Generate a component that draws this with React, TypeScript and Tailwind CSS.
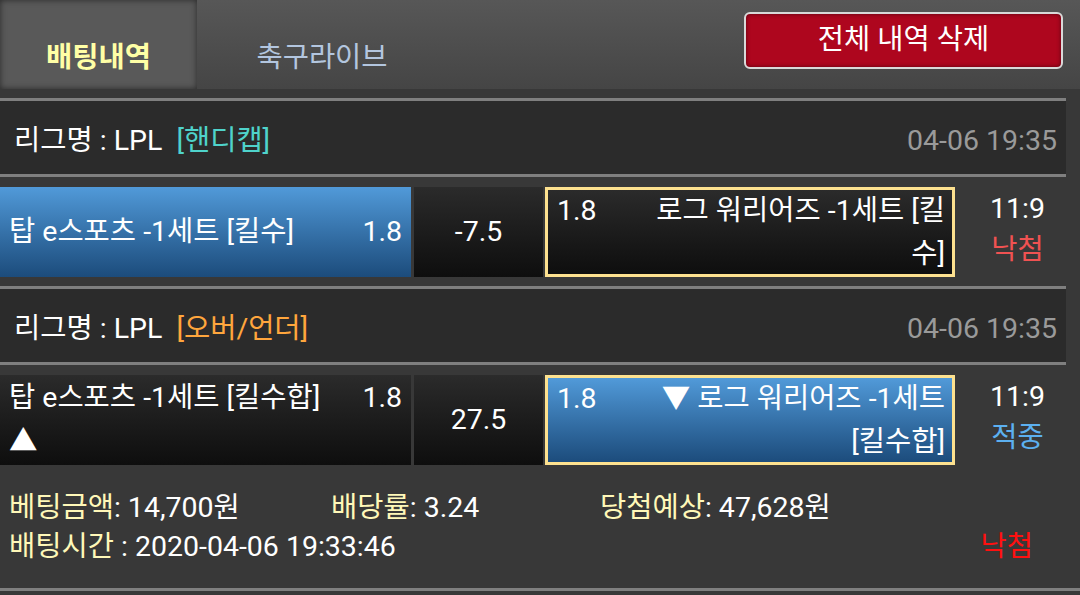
import React from "react";

const FONT = { fontFamily: 'Roboto, "Noto Sans CJK KR", "Noto Sans", sans-serif' };

const blueBox = "bg-gradient-to-b from-[#519ad9] to-[#1c4c7c]";
const darkBox = "bg-gradient-to-b from-[#2b2b2b] to-[#0e0e0e]";

function LeagueRow({ type, typeColor }: { type: string; typeColor: string }) {
  return (
    <div className="w-[1066px] h-[79px] border-y-[3px] border-[#7f7f7f] bg-[#2b2b2b] flex items-center justify-between pl-[14px] pr-[9px] pt-[7px]">
      <div className="flex items-center text-white">
        <span>리그명 : LPL</span>
        <span className={`ml-[14px] ${typeColor}`}>{type}</span>
      </div>
      <span className="text-[#9a9a9a]">04-06 19:35</span>
    </div>
  );
}

type MatchProps = {
  home: string[];
  homeSel: boolean;
  line: string;
  away: string[];
  awaySel: boolean;
  result: string;
  resultColor: string;
  last?: boolean;
};

function MatchRow({ home, homeSel, line, away, awaySel, result, resultColor, last }: MatchProps) {
  return (
    <div className={`flex h-[90px] mt-[10px] text-white ${last ? "" : "mb-[9px]"}`}>
      {/* home */}
      <div className={`w-[411px] flex items-center px-[9px] ${homeSel ? blueBox : darkBox}`}>
        <div className="flex w-full justify-between items-start leading-[44px]">
          <div>
            {home.map((l, i) => (
              <div key={i}>{l}</div>
            ))}
          </div>
          <span>1.8</span>
        </div>
      </div>
      {/* handicap / total */}
      <div className={`ml-[3px] w-[129px] flex items-center justify-center ${darkBox}`}>{line}</div>
      {/* away */}
      <div
        className={`ml-[2px] w-[410px] border-[3px] border-[#fde18f] flex items-center pl-[9px] pr-[7px] ${awaySel ? blueBox : darkBox}`}
      >
        <div className="flex w-full justify-between items-start leading-[43px]">
          <span>1.8</span>
          <div className="text-right">
            {away.map((l, i) => (
              <div key={i}>{l}</div>
            ))}
          </div>
        </div>
      </div>
      {/* score */}
      <div className="flex-1 flex flex-col items-center justify-center leading-[41px] pb-[7px]">
        <span>11:9</span>
        <span className={resultColor}>{result}</span>
      </div>
    </div>
  );
}

export default function App() {
  return (
    <div className="w-[1080px] h-[595px] bg-[#383838] overflow-hidden text-[28.5px]" style={FONT}>
      {/* header */}
      <div className="h-[89px] flex bg-gradient-to-b from-[#575757] to-[#454545]">
        <div className="w-[197px] h-full bg-[#595959] shadow-[inset_0_0_6px_rgba(0,0,0,0.55)] flex items-center justify-center pt-[27px]">
          <span className="font-bold text-[#ffffa6]">배팅내역</span>
        </div>
        <div className="w-[250px] h-full flex items-center justify-center pt-[27px]">
          <span className="text-[#b3c6df]">축구라이브</span>
        </div>
        <div className="flex-1 flex justify-end pt-[12px] pr-[17px]">
          <button className="w-[319px] h-[57px] rounded-[6px] border-2 border-[#d9d9d9] bg-[#ae061e] text-white shadow-[inset_0_0_4px_rgba(0,0,0,0.5)] leading-none">
            전체 내역 삭제
          </button>
        </div>
      </div>

      <div className="pt-[9px]">
        <LeagueRow type="[핸디캡]" typeColor="text-[#4fd3cb]" />
        <MatchRow
          home={["탑 e스포츠 -1세트 [킬수]"]}
          homeSel={true}
          line="-7.5"
          away={["로그 워리어즈 -1세트 [킬", "수]"]}
          awaySel={false}
          result="낙첨"
          resultColor="text-[#f05252]"
        />
        <LeagueRow type="[오버/언더]" typeColor="text-[#ffa63d]" />
        <MatchRow
          home={["탑 e스포츠 -1세트 [킬수합]", "▲"]}
          homeSel={false}
          line="27.5"
          away={["▼ 로그 워리어즈 -1세트", "[킬수합]"]}
          awaySel={true}
          result="적중"
          resultColor="text-[#5cb0f0]"
          last
        />

        {/* summary */}
        <div className="border-b-[3px] border-[#7f7f7f] pl-[9px] pr-[47px] pt-[23px] pb-[22px] leading-[39px] text-white">
          <div className="flex">
            <div className="w-[322px]">
              <span className="text-[#fff8b8]">베팅금액</span>: 14,700원
            </div>
            <div className="w-[269px]">
              <span className="text-[#fff8b8]">배당률</span>: 3.24
            </div>
            <div>
              <span className="text-[#fff8b8]">당첨예상</span>: 47,628원
            </div>
          </div>
          <div className="flex justify-between">
            <div>
              <span className="text-[#fff8b8]">배팅시간</span> : 2020-04-06 19:33:46
            </div>
            <span className="text-[#ff1010]">낙첨</span>
          </div>
        </div>
      </div>
    </div>
  );
}
